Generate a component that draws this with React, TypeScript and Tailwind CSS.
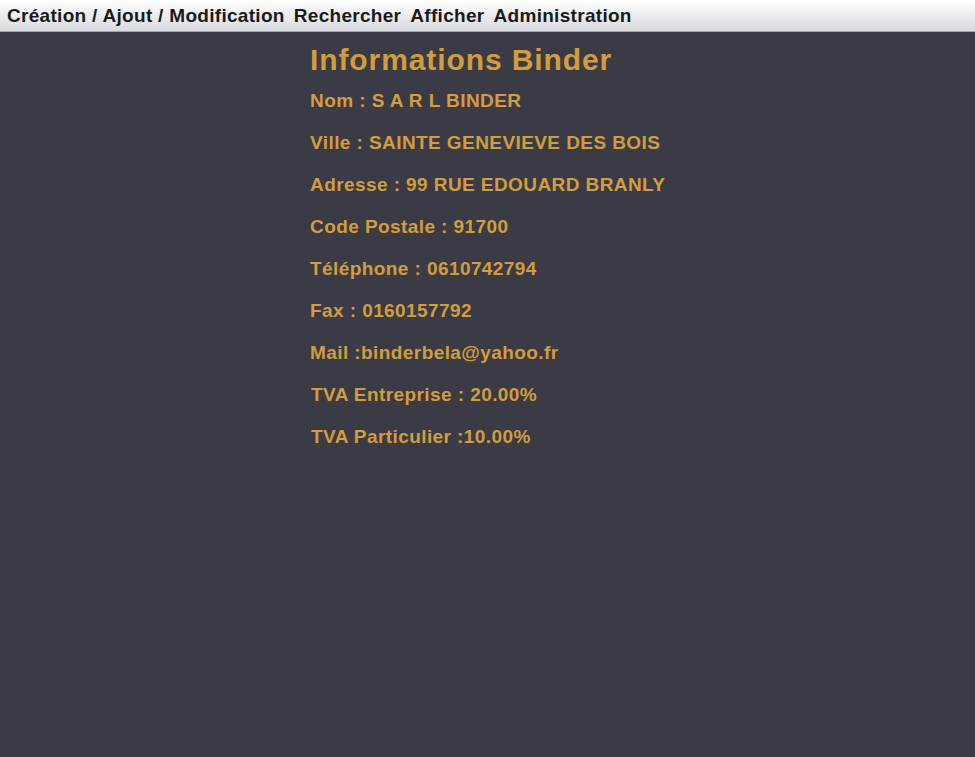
export default function App() {
  const rows = [
    { text: "Nom : S A R L BINDER", pad: "pl-[310px]" },
    { text: "Ville : SAINTE GENEVIEVE DES BOIS", pad: "pl-[310px]" },
    { text: "Adresse : 99 RUE EDOUARD BRANLY", pad: "pl-[310px]" },
    { text: "Code Postale : 91700", pad: "pl-[310px]" },
    { text: "Téléphone : 0610742794", pad: "pl-[310px]" },
    { text: "Fax : 0160157792", pad: "pl-[310px]" },
    { text: "Mail :binderbela@yahoo.fr", pad: "pl-[310px]" },
    { text: "TVA Entreprise : 20.00%", pad: "pl-[311px]" },
    { text: "TVA Particulier :10.00%", pad: "pl-[311px]" },
  ];

  return (
    <div className="w-[975px] h-[757px] flex flex-col bg-[#3b3b45] font-['Liberation_Sans',Arial,sans-serif]">
      {/* barre de menu */}
      <div className="h-[32px] flex items-center gap-[9px] pl-[7px] pt-[1px] bg-gradient-to-b from-[#ffffff] to-[#d8dadf] border-b border-[#a4a6ad] text-[19px] tracking-[0.3px] font-bold text-[#1a1a1a]">
        <span>Création / Ajout / Modification</span>
        <span>Rechercher</span>
        <span>Afficher</span>
        <span>Administration</span>
      </div>

      <div className="flex flex-col text-[#d29d3f] font-bold pt-[1px]">
        <h1 className="pl-[310px] pt-[7px] text-[30px] tracking-[0.9px] leading-[40px]">Informations Binder</h1>
        {rows.map((r, i) => (
          <p key={i} className={`${r.pad} text-[19px] tracking-[0.42px] leading-[42px]`}>
            {r.text}
          </p>
        ))}
      </div>
    </div>
  );
}
